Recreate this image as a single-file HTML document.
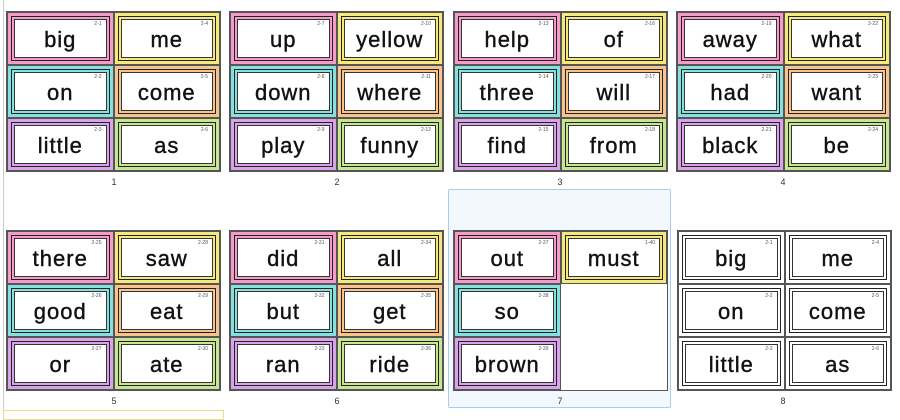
<!DOCTYPE html>
<html><head><meta charset="utf-8"><style>
*{margin:0;padding:0;box-sizing:border-box}
body{width:900px;height:416px;background:#fff;position:relative;overflow:hidden;font-family:"Liberation Sans",sans-serif}
.pg{position:absolute;width:215px;height:161px;border:1px solid #555;display:grid;grid-template-columns:1fr 1fr;grid-template-rows:1fr 1fr 1fr;background:#fff}
.c{position:relative;border:1px solid #555}
.c .o{position:absolute;left:3px;top:3px;right:3px;bottom:3px;border:1.5px solid #222}
.c .w{position:absolute;left:6px;top:6px;right:6px;bottom:6px;border:1px solid #333;background:#fff;display:flex;align-items:center;justify-content:center;font-size:22px;color:#111;letter-spacing:1px;-webkit-text-stroke:0.4px #111;padding-top:2px}
.c .n{position:absolute;right:11px;top:8px;font-size:5px;color:#555}
.p{background:#f59ac9}.y{background:#f4e97a}.t{background:#84e1e0}.r{background:#f8c48c}.v{background:#d9a3ea}.g{background:#c8e690}.b{background:#fff}
.e{background:#fff;border:none}
.lb{position:absolute;font-size:9px;color:#333;width:20px;text-align:center}
</style></head><body>
<div style="position:absolute;left:3px;top:0;width:1px;height:416px;background:#ccc"></div>
<div style="position:absolute;left:448px;top:189px;width:223px;height:219px;border:1px solid #a9cdee;background:#f2f8fe;border-radius:2px"></div>
<div style="position:absolute;left:3px;top:410px;width:221px;height:10px;border:1px solid #f0d98a"></div>

<div class="pg" style="left:6px;top:11px">
<div class="c p"><div class="o"></div><div class="w">big</div><span class="n">2-1</span></div>
<div class="c y"><div class="o"></div><div class="w">me</div><span class="n">2-4</span></div>
<div class="c t"><div class="o"></div><div class="w">on</div><span class="n">2-2</span></div>
<div class="c r"><div class="o"></div><div class="w">come</div><span class="n">2-5</span></div>
<div class="c v"><div class="o"></div><div class="w">little</div><span class="n">2-3</span></div>
<div class="c g"><div class="o"></div><div class="w">as</div><span class="n">2-6</span></div>
</div>
<div class="lb" style="left:104px;top:177px">1</div>

<div class="pg" style="left:229px;top:11px">
<div class="c p"><div class="o"></div><div class="w">up</div><span class="n">2-7</span></div>
<div class="c y"><div class="o"></div><div class="w">yellow</div><span class="n">2-10</span></div>
<div class="c t"><div class="o"></div><div class="w">down</div><span class="n">2-8</span></div>
<div class="c r"><div class="o"></div><div class="w">where</div><span class="n">2-11</span></div>
<div class="c v"><div class="o"></div><div class="w">play</div><span class="n">2-9</span></div>
<div class="c g"><div class="o"></div><div class="w">funny</div><span class="n">2-12</span></div>
</div>
<div class="lb" style="left:327px;top:177px">2</div>

<div class="pg" style="left:453px;top:11px">
<div class="c p"><div class="o"></div><div class="w">help</div><span class="n">2-13</span></div>
<div class="c y"><div class="o"></div><div class="w">of</div><span class="n">2-16</span></div>
<div class="c t"><div class="o"></div><div class="w">three</div><span class="n">2-14</span></div>
<div class="c r"><div class="o"></div><div class="w">will</div><span class="n">2-17</span></div>
<div class="c v"><div class="o"></div><div class="w">find</div><span class="n">2-15</span></div>
<div class="c g"><div class="o"></div><div class="w">from</div><span class="n">2-18</span></div>
</div>
<div class="lb" style="left:550px;top:177px">3</div>

<div class="pg" style="left:676px;top:11px">
<div class="c p"><div class="o"></div><div class="w">away</div><span class="n">2-19</span></div>
<div class="c y"><div class="o"></div><div class="w">what</div><span class="n">2-22</span></div>
<div class="c t"><div class="o"></div><div class="w">had</div><span class="n">2-20</span></div>
<div class="c r"><div class="o"></div><div class="w">want</div><span class="n">2-23</span></div>
<div class="c v"><div class="o"></div><div class="w">black</div><span class="n">2-21</span></div>
<div class="c g"><div class="o"></div><div class="w">be</div><span class="n">2-24</span></div>
</div>
<div class="lb" style="left:773px;top:177px">4</div>

<div class="pg" style="left:6px;top:230px">
<div class="c p"><div class="o"></div><div class="w">there</div><span class="n">2-25</span></div>
<div class="c y"><div class="o"></div><div class="w">saw</div><span class="n">2-28</span></div>
<div class="c t"><div class="o"></div><div class="w">good</div><span class="n">2-26</span></div>
<div class="c r"><div class="o"></div><div class="w">eat</div><span class="n">2-29</span></div>
<div class="c v"><div class="o"></div><div class="w">or</div><span class="n">2-27</span></div>
<div class="c g"><div class="o"></div><div class="w">ate</div><span class="n">2-30</span></div>
</div>
<div class="lb" style="left:104px;top:396px">5</div>

<div class="pg" style="left:229px;top:230px">
<div class="c p"><div class="o"></div><div class="w">did</div><span class="n">2-31</span></div>
<div class="c y"><div class="o"></div><div class="w">all</div><span class="n">2-34</span></div>
<div class="c t"><div class="o"></div><div class="w">but</div><span class="n">2-32</span></div>
<div class="c r"><div class="o"></div><div class="w">get</div><span class="n">2-35</span></div>
<div class="c v"><div class="o"></div><div class="w">ran</div><span class="n">2-33</span></div>
<div class="c g"><div class="o"></div><div class="w">ride</div><span class="n">2-36</span></div>
</div>
<div class="lb" style="left:327px;top:396px">6</div>

<div class="pg" style="left:453px;top:230px">
<div class="c p"><div class="o"></div><div class="w">out</div><span class="n">2-37</span></div>
<div class="c y"><div class="o"></div><div class="w">must</div><span class="n">1-40</span></div>
<div class="c t"><div class="o"></div><div class="w">so</div><span class="n">2-38</span></div>
<div class="c e"></div>
<div class="c v"><div class="o"></div><div class="w">brown</div><span class="n">2-39</span></div>
<div class="c e"></div>
</div>
<div class="lb" style="left:550px;top:396px">7</div>

<div class="pg" style="left:677px;top:230px">
<div class="c b"><div class="o"></div><div class="w">big</div><span class="n">2-1</span></div>
<div class="c b"><div class="o"></div><div class="w">me</div><span class="n">2-4</span></div>
<div class="c b"><div class="o"></div><div class="w">on</div><span class="n">2-2</span></div>
<div class="c b"><div class="o"></div><div class="w">come</div><span class="n">2-5</span></div>
<div class="c b"><div class="o"></div><div class="w">little</div><span class="n">2-3</span></div>
<div class="c b"><div class="o"></div><div class="w">as</div><span class="n">2-6</span></div>
</div>
<div class="lb" style="left:773px;top:396px">8</div>
</body></html>
